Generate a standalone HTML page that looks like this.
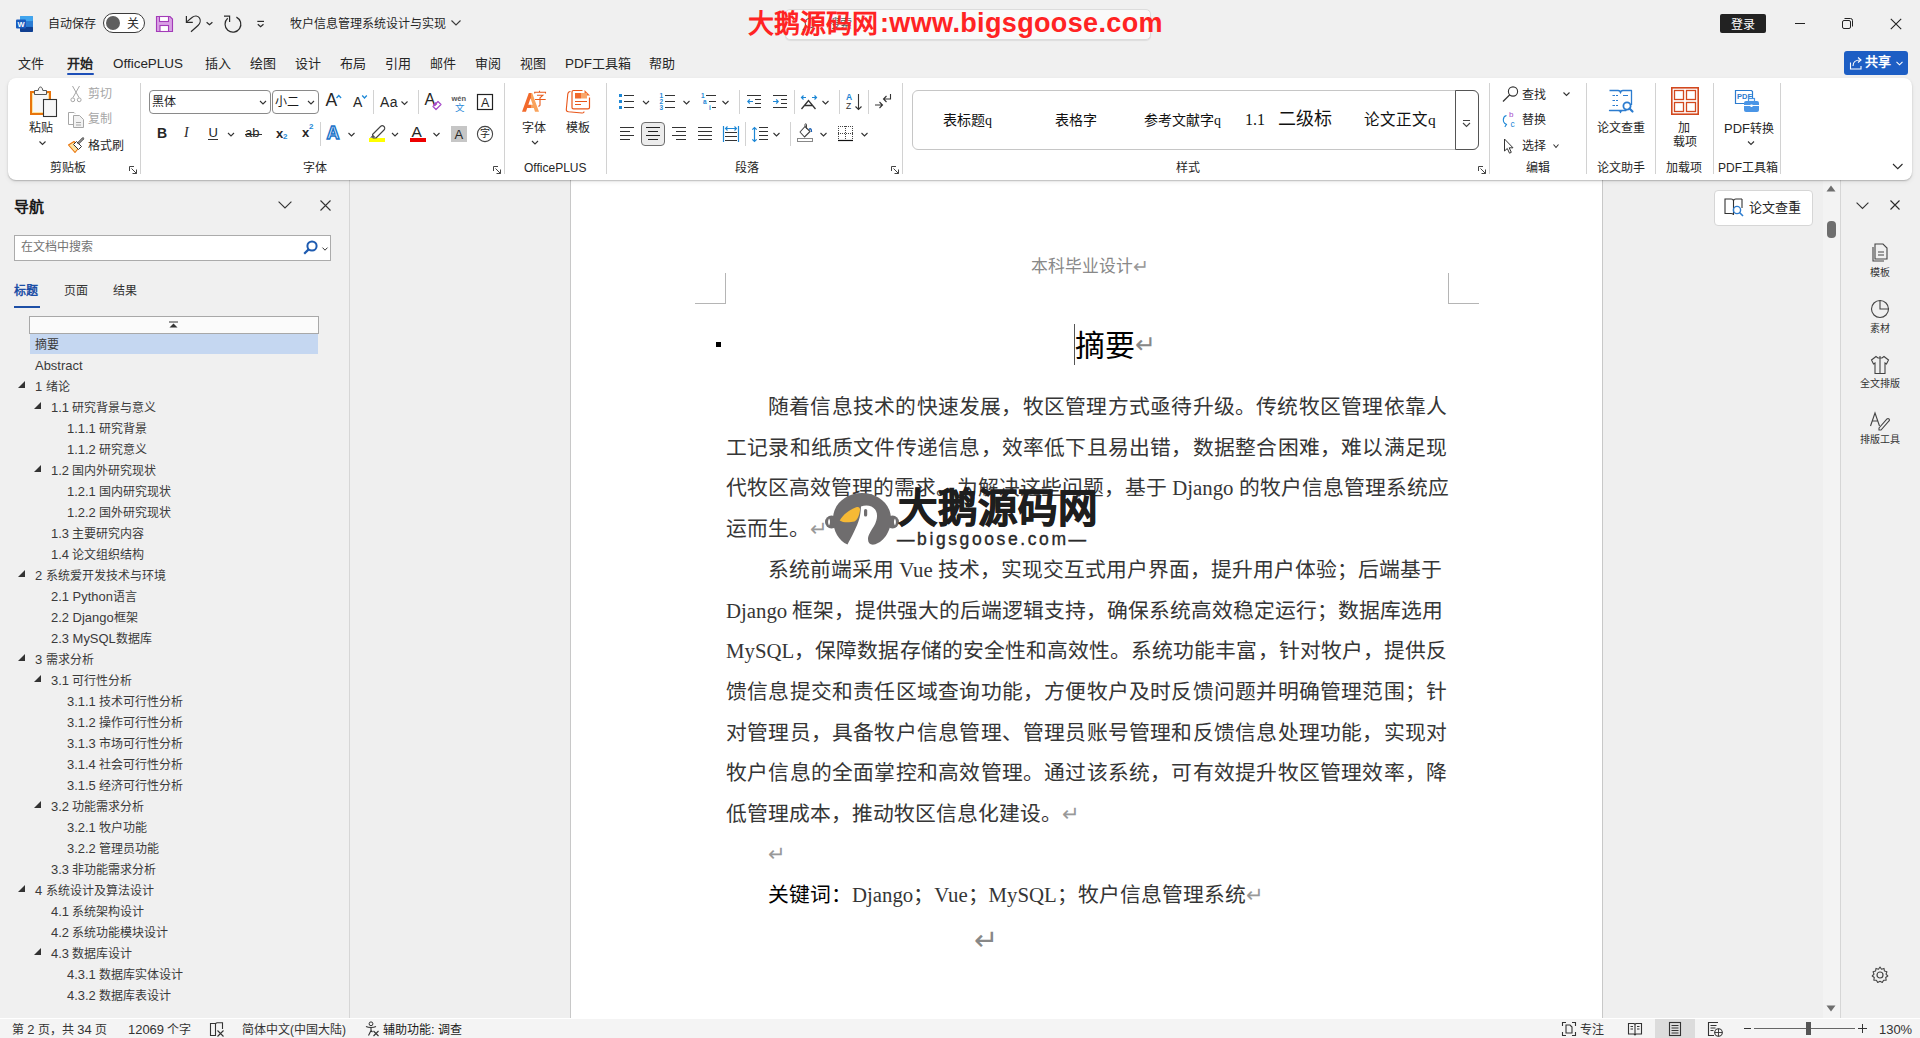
<!DOCTYPE html>
<html lang="zh-CN"><head><meta charset="utf-8"><title>Word</title>
<style>
*{box-sizing:border-box}
html,body{margin:0;padding:0}
body{width:1920px;height:1038px;overflow:hidden;position:relative;background:#f0f0f0;font-family:"Liberation Sans",sans-serif}
.a{position:absolute}
.t{white-space:nowrap}
svg{overflow:visible}
</style></head><body>
<div class="a" style="left:0px;top:0px;width:1920px;height:78px;background:#f0f0f0"></div>
<div class="a" style="left:0px;top:180px;width:349px;height:838px;background:#f0f0f0"></div>
<div class="a" style="left:349px;top:180px;width:1px;height:838px;background:#d6d6d6"></div>
<div class="a" style="left:350px;top:180px;width:1491px;height:838px;background:#efefef"></div>
<div class="a" style="left:570px;top:180px;width:1px;height:838px;background:#c8c8c8"></div>
<div class="a" style="left:571px;top:180px;width:1031px;height:838px;background:#fff"></div>
<div class="a" style="left:1602px;top:180px;width:1px;height:838px;background:#c8c8c8"></div>
<div class="a" style="left:1823px;top:180px;width:17px;height:838px;background:#f3f3f3"></div>
<div class="a" style="left:1840px;top:180px;width:1px;height:838px;background:#d6d6d6"></div>
<div class="a" style="left:1841px;top:180px;width:79px;height:838px;background:#f0f0f0"></div>
<div class="a" style="left:0px;top:1018px;width:1920px;height:1px;background:#fff"></div>
<div class="a" style="left:0px;top:1019px;width:1920px;height:19px;background:#f4f4f4"></div>
<div class="a" style="left:8px;top:78px;width:1904px;height:102px;background:#fff;border-radius:8px;box-shadow:0 1px 1.5px rgba(0,0,0,.22),0 2px 5px rgba(0,0,0,.07)"></div>
<svg class="a" style="left:16px;top:16px;" width="17" height="16" viewBox="0 0 17 16"><rect x="4" y="0" width="13" height="16" rx="1.2" fill="#2b7cd3"/><rect x="4" y="0" width="13" height="5.3" rx="1.2" fill="#41a5ee"/><rect x="4" y="10.7" width="13" height="5.3" rx="1.2" fill="#103f91"/><rect x="4" y="5.3" width="13" height="5.4" fill="#2b7cd3"/><rect x="0" y="3.5" width="10" height="9" rx="1" fill="#185abd"/><text x="5" y="11" font-size="7.5" font-weight="bold" fill="#fff" text-anchor="middle" font-family="Liberation Sans">W</text></svg>
<div class="a t" style="left:48px;top:18px;font-size:12px;line-height:12px;color:#262626;">自动保存</div>
<div class="a" style="left:103px;top:13px;width:42px;height:20px;border:1px solid #3b3b3b;border-radius:10px;background:#fff"></div>
<div class="a" style="left:106px;top:16px;width:14px;height:14px;border-radius:50%;background:#5e5e5e"></div>
<div class="a t" style="left:127px;top:18px;font-size:12px;line-height:12px;color:#262626;">关</div>
<svg class="a" style="left:156px;top:16px;" width="17" height="16" viewBox="0 0 17 16"><path d="M0.5 0.5h13.5l2.5 2.5v12.5h-16z" fill="#d9a0e4" stroke="#a33bb8" stroke-width="1.1"/><rect x="3.5" y="0.5" width="9" height="5" fill="#fff" stroke="#a33bb8" stroke-width="1.1"/><rect x="4" y="9.5" width="8.5" height="6" fill="#fff" stroke="#a33bb8" stroke-width="1.1"/></svg>
<svg class="a" style="left:180px;top:10px;" width="30" height="28" viewBox="0 0 30 28"><path d="M6.4 6V12.4H12.8" fill="none" stroke="#2b2b2b" stroke-width="1.2"/><path d="M7 11.6L12 7.5C14.5 5.3 18 5.5 19.5 8C20.8 10.2 20.2 13.5 18 15.5L11 21.8" fill="none" stroke="#2b2b2b" stroke-width="1.2"/><path d="M26.6 12.2L29.5 14.8L32.4 12.2" fill="none" stroke="#2b2b2b" stroke-width="1.2"/></svg>
<svg class="a" style="left:220px;top:10px;" width="20" height="28" viewBox="0 0 20 28"><path d="M4 6.2H9.6V11.9" fill="none" stroke="#2b2b2b" stroke-width="1.2"/><path d="M16.4 7.1A7.9 7.9 0 1 1 7.7 8.3" fill="none" stroke="#2b2b2b" stroke-width="1.2"/></svg>
<svg class="a" style="left:250px;top:10px;" width="20" height="28" viewBox="0 0 20 28"><path d="M7.3 11.4H14" stroke="#2b2b2b" stroke-width="1.2"/><path d="M7.8 14.3L10.6 16.8L13.5 14.3" fill="none" stroke="#2b2b2b" stroke-width="1.2"/></svg>
<div class="a t" style="left:290px;top:18px;font-size:12px;line-height:12px;color:#262626;">牧户信息管理系统设计与实现</div>
<svg class="a" style="left:451px;top:20px;" width="10" height="6" viewBox="0 0 10 6"><path d="M0.5 0.5L5 5L9.5 0.5" fill="none" stroke="#3a3a3a" stroke-width="1.1"/></svg>
<div class="a" style="left:785px;top:9px;width:366px;height:31px;background:#fafafa;border:1px solid #dcdcdc;border-radius:5px;box-shadow:0 1px 1px rgba(0,0,0,.08)"></div>
<svg class="a" style="left:802px;top:17px;" width="14" height="14" viewBox="0 0 14 14"><circle cx="8" cy="6" r="4.8" fill="none" stroke="#555" stroke-width="1.1"/><path d="M4.6 9.4L0.8 13.2" stroke="#555" stroke-width="1.2"/></svg>
<div class="a t" style="left:828px;top:18px;font-size:12px;line-height:12px;color:#555;">搜索</div>
<div class="a t" style="left:748px;top:9px;font-size:26px;line-height:30px;color:#ff2323;font-weight:bold;letter-spacing:0px">大鹅源码网</div>
<div class="a t" style="left:880px;top:7px;font-size:27px;line-height:32px;color:#ff2323;font-weight:bold;letter-spacing:0.35px">:www.bigsgoose.com</div>
<div class="a" style="left:1720px;top:14px;width:46px;height:19px;background:#222;border-radius:2px"></div>
<div class="a t" style="left:1731px;top:19px;font-size:12px;line-height:12px;color:#fff;">登录</div>
<div class="a" style="left:1795px;top:23px;width:10px;height:1px;background:#222"></div>
<svg class="a" style="left:1842px;top:18px;" width="12" height="12" viewBox="0 0 12 12"><rect x="0.5" y="2.5" width="8" height="8" rx="1.5" fill="none" stroke="#222" stroke-width="1"/><path d="M2.5 0.5h6a2 2 0 0 1 2 2v6" fill="none" stroke="#222" stroke-width="1"/></svg>
<svg class="a" style="left:1890px;top:18px;" width="12" height="12" viewBox="0 0 12 12"><path d="M0.8 0.8L11.2 11.2M11.2 0.8L0.8 11.2" stroke="#222" stroke-width="1.1"/></svg>
<div class="a t" style="left:18px;top:57px;font-size:13px;line-height:14px;color:#262626;">文件</div>
<div class="a t" style="left:67px;top:57px;font-size:13px;line-height:14px;color:#262626;font-weight:bold">开始</div>
<div class="a t" style="left:113px;top:57px;font-size:13px;line-height:14px;color:#262626;"><span style="font-size:1.035em">OfficePLUS</span></div>
<div class="a t" style="left:205px;top:57px;font-size:13px;line-height:14px;color:#262626;">插入</div>
<div class="a t" style="left:250px;top:57px;font-size:13px;line-height:14px;color:#262626;">绘图</div>
<div class="a t" style="left:295px;top:57px;font-size:13px;line-height:14px;color:#262626;">设计</div>
<div class="a t" style="left:340px;top:57px;font-size:13px;line-height:14px;color:#262626;">布局</div>
<div class="a t" style="left:385px;top:57px;font-size:13px;line-height:14px;color:#262626;">引用</div>
<div class="a t" style="left:430px;top:57px;font-size:13px;line-height:14px;color:#262626;">邮件</div>
<div class="a t" style="left:475px;top:57px;font-size:13px;line-height:14px;color:#262626;">审阅</div>
<div class="a t" style="left:520px;top:57px;font-size:13px;line-height:14px;color:#262626;">视图</div>
<div class="a t" style="left:565px;top:57px;font-size:13px;line-height:14px;color:#262626;"><span style="font-size:1.035em">PDF</span>工具箱</div>
<div class="a t" style="left:649px;top:57px;font-size:13px;line-height:14px;color:#262626;">帮助</div>
<div class="a" style="left:67px;top:73px;width:27px;height:2px;background:#1d4fb8;border-radius:1px"></div>
<div class="a" style="left:1844px;top:51px;width:64px;height:24px;background:#1d5ec4;border-radius:3px"></div>
<svg class="a" style="left:1849px;top:56px;" width="14" height="14" viewBox="0 0 14 14"><path d="M1.5 6.5v6.5h10.5v-3" fill="none" stroke="#fff" stroke-width="1.1"/><path d="M4 10c0-4 3-6 7-6" fill="none" stroke="#fff" stroke-width="1.1"/><path d="M9 1.5L12 4L9 6.5" fill="none" stroke="#fff" stroke-width="1.1"/></svg>
<div class="a t" style="left:1865px;top:55px;font-size:13px;line-height:14px;color:#fff;font-weight:bold">共享</div>
<svg class="a" style="left:1896px;top:61px;" width="7" height="5" viewBox="0 0 7 5"><path d="M0.5 0.8L3.5 3.8L6.5 0.8" fill="none" stroke="#fff" stroke-width="1.1"/></svg>
<div class="a" style="left:140px;top:83px;width:1px;height:91px;background:#d2d2d2"></div>
<div class="a" style="left:504px;top:83px;width:1px;height:91px;background:#d2d2d2"></div>
<div class="a" style="left:606px;top:83px;width:1px;height:91px;background:#d2d2d2"></div>
<div class="a" style="left:902px;top:83px;width:1px;height:91px;background:#d2d2d2"></div>
<div class="a" style="left:1489px;top:83px;width:1px;height:91px;background:#d2d2d2"></div>
<div class="a" style="left:1586px;top:83px;width:1px;height:91px;background:#d2d2d2"></div>
<div class="a" style="left:1655px;top:83px;width:1px;height:91px;background:#d2d2d2"></div>
<div class="a" style="left:1713px;top:83px;width:1px;height:91px;background:#d2d2d2"></div>
<div class="a" style="left:1780px;top:83px;width:1px;height:91px;background:#d2d2d2"></div>
<div class="a t" style="left:50px;top:162px;font-size:12px;line-height:12px;color:#262626;">剪贴板</div>
<div class="a t" style="left:303px;top:162px;font-size:12px;line-height:12px;color:#262626;">字体</div>
<div class="a t" style="left:735px;top:162px;font-size:12px;line-height:12px;color:#262626;">段落</div>
<div class="a t" style="left:1176px;top:162px;font-size:12px;line-height:12px;color:#262626;">样式</div>
<div class="a t" style="left:1526px;top:162px;font-size:12px;line-height:12px;color:#262626;">编辑</div>
<div class="a t" style="left:1597px;top:162px;font-size:12px;line-height:12px;color:#262626;">论文助手</div>
<div class="a t" style="left:1666px;top:162px;font-size:12px;line-height:12px;color:#262626;">加载项</div>
<div class="a t" style="left:524px;top:162px;font-size:12px;line-height:12px;color:#262626;">OfficePLUS</div>
<div class="a t" style="left:1718px;top:162px;font-size:12px;line-height:12px;color:#262626;">PDF工具箱</div>
<div class="a t" style="left:29px;top:122px;font-size:12px;line-height:12px;color:#262626;">粘贴</div>
<div class="a t" style="left:88px;top:88px;font-size:12px;line-height:12px;color:#a6a6a6;">剪切</div>
<div class="a t" style="left:88px;top:113px;font-size:12px;line-height:12px;color:#a6a6a6;">复制</div>
<div class="a t" style="left:88px;top:140px;font-size:12px;line-height:12px;color:#262626;">格式刷</div>
<div class="a" style="left:149px;top:90px;width:122px;height:24px;border:1px solid #8a8a8a;border-radius:4px;background:#fff"></div>
<div class="a t" style="left:152px;top:96px;font-size:12px;line-height:12px;color:#1a1a1a;">黑体</div>
<div class="a" style="left:272px;top:90px;width:47px;height:24px;border:1px solid #8a8a8a;border-radius:4px;background:#fff"></div>
<div class="a t" style="left:275px;top:96px;font-size:12px;line-height:12px;color:#1a1a1a;">小二</div>
<div class="a t" style="left:325.5px;top:92px;font-size:17.5px;line-height:17px;color:#262626;font-weight:300">A</div>
<div class="a t" style="left:353px;top:95.5px;font-size:14px;line-height:13px;color:#262626;">A</div>
<div class="a" style="left:373px;top:90px;width:1px;height:24px;background:#d2d2d2"></div>
<div class="a t" style="left:380px;top:95.5px;font-size:14px;line-height:13px;color:#262626;letter-spacing:0.5px">Aa</div>
<div class="a" style="left:418px;top:90px;width:1px;height:24px;background:#d2d2d2"></div>
<div class="a t" style="left:424.5px;top:92px;font-size:16px;line-height:16px;color:#262626;">A</div>
<div class="a t" style="left:451.5px;top:94.5px;font-size:7.5px;line-height:8px;color:#555;font-weight:bold">wén</div>
<div class="a t" style="left:455px;top:102.5px;font-size:9.5px;line-height:9px;color:#2c8ad8;">文</div>
<div class="a t" style="left:481px;top:96.5px;font-size:12.5px;line-height:12px;color:#262626;">A</div>
<div class="a t" style="left:157px;top:126px;font-size:14px;line-height:14px;color:#262626;font-weight:bold">B</div>
<div class="a t" style="left:184px;top:126px;font-size:14px;line-height:14px;color:#262626;font-style:italic;font-family:'Liberation Serif'">I</div>
<div class="a t" style="left:208.5px;top:126px;font-size:13px;line-height:14px;color:#262626;">U</div>
<div class="a t" style="left:245px;top:126px;font-size:13px;line-height:13px;color:#262626;">ab</div>
<div class="a t" style="left:276px;top:127px;font-size:13px;line-height:13px;color:#262626;font-weight:bold">x</div>
<div class="a t" style="left:283px;top:133px;font-size:8px;line-height:8px;color:#1e88d6;font-weight:bold">2</div>
<div class="a t" style="left:302px;top:126px;font-size:13px;line-height:13px;color:#262626;font-weight:bold">x</div>
<div class="a t" style="left:309px;top:122.5px;font-size:8px;line-height:8px;color:#1e88d6;font-weight:bold">2</div>
<div class="a" style="left:320px;top:122px;width:1px;height:24px;background:#d2d2d2"></div>
<div class="a t" style="left:326.5px;top:124px;font-size:18px;line-height:18px;color:#e9f3fc;font-weight:bold;-webkit-text-stroke:1.4px #1a73c9">A</div>
<div class="a" style="left:369px;top:138px;width:16px;height:4px;background:#ffff00"></div>
<div class="a t" style="left:411.5px;top:124px;font-size:15.5px;line-height:15px;color:#262626;">A</div>
<div class="a" style="left:410px;top:138px;width:16px;height:4px;background:#ee0000"></div>
<div class="a" style="left:451px;top:126px;width:16px;height:16px;background:#c6c6c6"></div>
<div class="a t" style="left:454.5px;top:128.5px;font-size:13px;line-height:12px;color:#262626;">A</div>
<div class="a t" style="left:480px;top:129px;font-size:10px;line-height:10px;color:#262626;">字</div>
<div class="a t" style="left:522px;top:122px;font-size:12px;line-height:12px;color:#262626;">字体</div>
<div class="a t" style="left:566px;top:122px;font-size:12px;line-height:12px;color:#262626;">模板</div>
<div class="a t" style="left:659.5px;top:93px;font-size:6.5px;line-height:6px;color:#1e88d6;font-weight:bold">1</div>
<div class="a t" style="left:659.5px;top:99px;font-size:6.5px;line-height:6px;color:#1e88d6;font-weight:bold">2</div>
<div class="a t" style="left:659.5px;top:105px;font-size:6.5px;line-height:6px;color:#1e88d6;font-weight:bold">3</div>
<div class="a t" style="left:701px;top:93px;font-size:6.5px;line-height:6px;color:#1e88d6;font-weight:bold">1</div>
<div class="a t" style="left:703px;top:99px;font-size:6.5px;line-height:6px;color:#1e88d6;font-weight:bold">a</div>
<div class="a t" style="left:709px;top:105px;font-size:6.5px;line-height:6px;color:#1e88d6;font-weight:bold">i</div>
<div class="a" style="left:739px;top:90px;width:1px;height:24px;background:#d2d2d2"></div>
<div class="a" style="left:794px;top:90px;width:1px;height:24px;background:#d2d2d2"></div>
<div class="a" style="left:839px;top:90px;width:1px;height:24px;background:#d2d2d2"></div>
<div class="a t" style="left:846px;top:93px;font-size:8.5px;line-height:8px;color:#1e88d6;font-weight:bold">A</div>
<div class="a t" style="left:846px;top:102px;font-size:8.5px;line-height:8px;color:#333;">Z</div>
<div class="a" style="left:868px;top:90px;width:1px;height:24px;background:#d2d2d2"></div>
<div class="a" style="left:641px;top:122px;width:24px;height:24px;background:#ececec;border:1px solid #6e6e6e;border-radius:4px"></div>
<div class="a" style="left:745px;top:122px;width:1px;height:24px;background:#d2d2d2"></div>
<div class="a" style="left:790px;top:122px;width:1px;height:24px;background:#d2d2d2"></div>
<div class="a" style="left:912px;top:90px;width:567px;height:60px;border:1px solid #c6c6c6;border-radius:6px;background:#fff"></div>
<div class="a" style="left:1455px;top:90px;width:24px;height:60px;border:1px solid #555;border-radius:0 6px 6px 0;background:#fff"></div>
<div class="a t" style="left:943px;top:113px;font-size:14px;line-height:16px;color:#111;font-family:'Liberation Serif',serif">表标题q</div>
<div class="a t" style="left:1055px;top:113px;font-size:14px;line-height:16px;color:#111;font-family:'Liberation Serif',serif">表格字</div>
<div class="a t" style="left:1144px;top:113px;font-size:14px;line-height:16px;color:#111;font-family:'Liberation Serif',serif">参考文献字q</div>
<div class="a t" style="left:1245px;top:111px;font-size:16px;line-height:18px;color:#111;font-family:'Liberation Serif',serif">1.1</div>
<div class="a t" style="left:1278px;top:110px;font-size:18px;line-height:19px;color:#111;font-family:'Liberation Serif',serif">二级标</div>
<div class="a t" style="left:1364px;top:111px;font-size:15.5px;line-height:18px;color:#111;font-family:'Liberation Serif',serif">论文正文q</div>
<div class="a t" style="left:1522px;top:88.5px;font-size:12px;line-height:12px;color:#262626;">查找</div>
<div class="a t" style="left:1509px;top:111px;font-size:8px;line-height:8px;color:#a64bc9;">b</div>
<div class="a t" style="left:1510.5px;top:119.5px;font-size:8.5px;line-height:8px;color:#1e88d6;">c</div>
<div class="a t" style="left:1522px;top:114px;font-size:12px;line-height:12px;color:#262626;">替换</div>
<div class="a t" style="left:1522px;top:140px;font-size:12px;line-height:12px;color:#262626;">选择</div>
<div class="a t" style="left:1597px;top:121.5px;font-size:12px;line-height:12px;color:#262626;">论文查重</div>
<div class="a t" style="left:1678px;top:121.5px;font-size:12px;line-height:12px;color:#262626;">加</div>
<div class="a t" style="left:1673px;top:135.5px;font-size:12px;line-height:12px;color:#262626;">载项</div>
<div class="a t" style="left:1737px;top:92.5px;font-size:7.5px;line-height:8px;color:#2c7ccf;font-weight:bold">PDF</div>
<div class="a t" style="left:1724px;top:122.5px;font-size:12px;line-height:12px;color:#262626;"><span style="font-size:1.08em">PDF</span>转换</div>
<svg class="a" style="left:0;top:0;z-index:5;pointer-events:none" width="1920" height="200" viewBox="0 0 1920 200"><path d="M129.5 171V166.5H134" fill="none" stroke="#444" stroke-width="1"/><path d="M131.5 168.5L136.5 173.5M136.5 169.5V173.5H132.5" fill="none" stroke="#444" stroke-width="1"/><path d="M493.5 171V166.5H498" fill="none" stroke="#444" stroke-width="1"/><path d="M495.5 168.5L500.5 173.5M500.5 169.5V173.5H496.5" fill="none" stroke="#444" stroke-width="1"/><path d="M891.5 171V166.5H896" fill="none" stroke="#444" stroke-width="1"/><path d="M893.5 168.5L898.5 173.5M898.5 169.5V173.5H894.5" fill="none" stroke="#444" stroke-width="1"/><path d="M1478.5 171V166.5H1483" fill="none" stroke="#444" stroke-width="1"/><path d="M1480.5 168.5L1485.5 173.5M1485.5 169.5V173.5H1481.5" fill="none" stroke="#444" stroke-width="1"/><path d="M1893 164L1897.75 168.7L1902.5 164" fill="none" stroke="#2a2a2a" stroke-width="1.1"/><rect x="31" y="92" width="19" height="22" fill="#f7f7f7" stroke="#e8740c" stroke-width="2"/><rect x="32.5" y="93.5" width="16" height="19" fill="none" stroke="#fde3a0" stroke-width="1"/><path d="M34.5 94.5V90.5H38.2C38.5 88 39.5 87 40.5 87C41.5 87 42.5 88 42.8 90.5H46.5V94.5z" fill="#f7f7f7" stroke="#555" stroke-width="1"/><rect x="43.5" y="99.5" width="13" height="17" fill="#f7f7f7" stroke="#333" stroke-width="1.1"/><path d="M39.5 141.5L42.5 144.5L45.5 141.5" fill="none" stroke="#333" stroke-width="1.1"/><path d="M72.5 86L79 97.5M79.5 86L73 97.5" stroke="#a6a6a6" stroke-width="1"/><circle cx="72.8" cy="99.8" r="1.9" fill="none" stroke="#a6a6a6" stroke-width="1"/><circle cx="79.2" cy="99.8" r="1.9" fill="none" stroke="#a6a6a6" stroke-width="1"/><path d="M73 124.5H68.5V112.5H74L75 113.5" fill="none" stroke="#a6a6a6" stroke-width="1"/><path d="M73.5 115.5H79.5L83.5 119.5V127.5H73.5z" fill="#f2f2f2" stroke="#a6a6a6" stroke-width="1"/><path d="M76 122.5h5M76 125h5" stroke="#a6a6a6" stroke-width="1"/><path d="M68.5 145L74 141.5L79.5 147L75 152.5z" fill="#fde3a0" stroke="#e8740c" stroke-width="1.1" stroke-linejoin="round"/><path d="M73.5 144.5L76.5 141.5L81.5 146.5L78.5 149.5z" fill="#fff" stroke="#333" stroke-width="1"/><path d="M78.5 143L83 138.5" stroke="#333" stroke-width="2.4" stroke-linecap="round"/><path d="M78.5 143L83 138.5" stroke="#fff" stroke-width="0.8" stroke-linecap="round"/><path d="M260 101L263.0 104L266 101" fill="none" stroke="#333" stroke-width="1.1"/><path d="M308 101L311.0 104L314 101" fill="none" stroke="#333" stroke-width="1.1"/><path d="M336.5 98L338.8 95.5L341.1 98" fill="none" stroke="#1e88d6" stroke-width="1.3"/><path d="M362.2 95.5L364.5 98L366.8 95.5" fill="none" stroke="#1e88d6" stroke-width="1.3"/><path d="M401.5 101.5L404.5 104.5L407.5 101.5" fill="none" stroke="#333" stroke-width="1.1"/><path d="M433 106.5L438 101.5L441 104.5L436 109.5z" fill="#fff" stroke="#a64bc9" stroke-width="1.2" stroke-linejoin="round"/><path d="M433.8 105.7L436.5 103" stroke="#a64bc9" stroke-width="2.5"/><rect x="477.5" y="94.5" width="15" height="15" fill="none" stroke="#222" stroke-width="1.2"/><path d="M208 139.5H218" stroke="#333" stroke-width="1"/><path d="M228 133L231.0 136L234 133" fill="none" stroke="#333" stroke-width="1.1"/><path d="M245 134.5H262" stroke="#333" stroke-width="1"/><path d="M348.5 133L351.5 136L354.5 133" fill="none" stroke="#333" stroke-width="1.1"/><path d="M372.5 134.5L380.5 126.5C381.5 125.5 383 125.5 384 126.5C385 127.5 385 129 384 130L376 138H373z" fill="#fff" stroke="#444" stroke-width="1.1" stroke-linejoin="round"/><path d="M370 137.8L373 134.8L375.5 137.3z" fill="#555"/><path d="M392 133L395.0 136L398 133" fill="none" stroke="#333" stroke-width="1.1"/><path d="M433.5 133L436.5 136L439.5 133" fill="none" stroke="#333" stroke-width="1.1"/><circle cx="485" cy="134" r="7.6" fill="none" stroke="#444" stroke-width="1.1"/><defs><linearGradient id="ag" gradientUnits="userSpaceOnUse" x1="522" y1="0" x2="539" y2="0"><stop offset="0.5" stop-color="#f26a2c"/><stop offset="0.5" stop-color="#f9a35c"/></linearGradient></defs><path d="M522 111.8L528.8 93H532.2L539 111.8H535L533.8 108H527.2L526 111.8zM528.3 104.8H532.7L530.5 98.2z" fill="url(#ag)" fill-rule="evenodd"/><path d="M534.7 93.5V92.2H545.5V93.5M539.5 90.8V92M537 95.3H542.8L540 97.8V104.8C540 105.8 539.3 106.3 538.3 106M535 99.5H545.7" fill="none" stroke="#e85a1a" stroke-width="1.1"/><path d="M532 141L535.0 144L538 141" fill="none" stroke="#333" stroke-width="1.1"/><path d="M570.5 91.5C568.5 91.5 568 92.5 567.8 94L566.3 109.5C566.2 111 566.8 111.5 568.5 111.8L582 113C583.5 113.1 584 112.5 584 111.5" fill="none" stroke="#e8561a" stroke-width="1.1"/><path d="M582.5 90.5H573.5C572.5 90.5 572 91 572 92V107.5C572 108.2 572.5 108.8 573.5 108.8H588C589 108.8 589.5 108.2 589.5 107.5V97.5" fill="none" stroke="#e8561a" stroke-width="1.2"/><path d="M584.5 90L590 95.5H584.5z" fill="#f26a2c"/><rect x="575" y="93" width="6" height="5.5" fill="#f26a2c"/><rect x="581" y="93" width="6" height="5.5" fill="#f9a66a"/><path d="M575 101.5H587M575 104.5H581" stroke="#e8561a" stroke-width="1.1"/><rect x="619" y="94" width="3" height="3" fill="#1e88d6"/><rect x="619" y="100" width="3" height="3" fill="#1e88d6"/><rect x="619" y="106" width="3" height="3" fill="#1e88d6"/><path d="M624 95.5H634" stroke="#333" stroke-width="1"/><path d="M624 101.5H634" stroke="#333" stroke-width="1"/><path d="M624 107.5H634" stroke="#333" stroke-width="1"/><path d="M643 101L646.0 104L649 101" fill="none" stroke="#333" stroke-width="1.1"/><path d="M665 95.5H675" stroke="#333" stroke-width="1"/><path d="M665 101.5H675" stroke="#333" stroke-width="1"/><path d="M665 107.5H675" stroke="#333" stroke-width="1"/><path d="M683.5 101L686.5 104L689.5 101" fill="none" stroke="#333" stroke-width="1.1"/><path d="M706 95.5H716" stroke="#333" stroke-width="1"/><path d="M709 101.5H716" stroke="#333" stroke-width="1"/><path d="M712 107.5H716" stroke="#333" stroke-width="1"/><path d="M722.5 101L725.5 104L728.5 101" fill="none" stroke="#333" stroke-width="1.1"/><path d="M747 95.5H761" stroke="#333" stroke-width="1"/><path d="M755 99.5H761" stroke="#333" stroke-width="1"/><path d="M755 103.5H761" stroke="#333" stroke-width="1"/><path d="M747 107.5H761" stroke="#333" stroke-width="1"/><path d="M753 101.5H747.8M749.8 99.3L747.8 101.5L749.8 103.7" fill="none" stroke="#1e88d6" stroke-width="1.2"/><path d="M773 95.5H787" stroke="#333" stroke-width="1"/><path d="M781 99.5H787" stroke="#333" stroke-width="1"/><path d="M781 103.5H787" stroke="#333" stroke-width="1"/><path d="M773 107.5H787" stroke="#333" stroke-width="1"/><path d="M773 101.5H778.2M776.2 99.3L778.2 101.5L776.2 103.7" fill="none" stroke="#1e88d6" stroke-width="1.2"/><path d="M801.5 97.5H806M803.5 95.5L801.5 97.5L803.5 99.5M812 97.5H816.5M814.5 95.5L816.5 97.5L814.5 99.5" fill="none" stroke="#1e88d6" stroke-width="1.2"/><path d="M801.5 109L808.5 100.5L815.5 109M804.5 105.5H812.5" fill="none" stroke="#333" stroke-width="1.3"/><path d="M822.5 101L825.5 104L828.5 101" fill="none" stroke="#333" stroke-width="1.1"/><path d="M858.5 94V109.5M855.5 106.5L858.5 109.5L861.5 106.5" fill="none" stroke="#333" stroke-width="1.1"/><path d="M875 105H882.5M879.5 102L882.5 105L879.5 108" fill="none" stroke="#333" stroke-width="1.1"/><path d="M890.5 94V99H883.5M886.5 96L883.5 99L886.5 102" fill="none" stroke="#333" stroke-width="1.1"/><path d="M620 127.5H634" stroke="#333" stroke-width="1"/><path d="M620 131.5H630" stroke="#333" stroke-width="1"/><path d="M620 135.5H634" stroke="#333" stroke-width="1"/><path d="M620 139.5H630" stroke="#333" stroke-width="1"/><path d="M646 127.5H660" stroke="#222" stroke-width="1"/><path d="M648 131.5H658" stroke="#222" stroke-width="1"/><path d="M646 135.5H660" stroke="#222" stroke-width="1"/><path d="M648 139.5H658" stroke="#222" stroke-width="1"/><path d="M672 127.5H686" stroke="#333" stroke-width="1"/><path d="M676 131.5H686" stroke="#333" stroke-width="1"/><path d="M672 135.5H686" stroke="#333" stroke-width="1"/><path d="M676 139.5H686" stroke="#333" stroke-width="1"/><path d="M698 127.5H712" stroke="#333" stroke-width="1"/><path d="M698 131.5H712" stroke="#333" stroke-width="1"/><path d="M698 135.5H712" stroke="#333" stroke-width="1"/><path d="M698 139.5H712" stroke="#333" stroke-width="1"/><path d="M723.5 126V142M738.5 126V142" stroke="#1e88d6" stroke-width="1.2"/><path d="M725.5 128.5H736.5M727.5 126.5L725.5 128.5L727.5 130.5M734.5 126.5L736.5 128.5L734.5 130.5" fill="none" stroke="#1e88d6" stroke-width="1.1"/><path d="M725 132.5H737" stroke="#333" stroke-width="1"/><path d="M725 136.5H737" stroke="#333" stroke-width="1"/><path d="M725 140.5H737" stroke="#333" stroke-width="1"/><path d="M754.5 127.5V141.5M752.3 129.7L754.5 127.5L756.7 129.7M752.3 139.3L754.5 141.5L756.7 139.3" fill="none" stroke="#1e88d6" stroke-width="1.2"/><path d="M759 127.5H768" stroke="#333" stroke-width="1"/><path d="M759 131.5H768" stroke="#333" stroke-width="1"/><path d="M759 135.5H768" stroke="#333" stroke-width="1"/><path d="M759 139.5H768" stroke="#333" stroke-width="1"/><path d="M773.5 133L776.5 136L779.5 133" fill="none" stroke="#333" stroke-width="1.1"/><path d="M800 132L805 126.5L810 131.5L804.5 137z" fill="#fff" stroke="#444" stroke-width="1.1" stroke-linejoin="round"/><path d="M805 126.5V124.5C805 123.5 806.5 123.5 806.5 124.5V129" fill="none" stroke="#444" stroke-width="1"/><path d="M809 129.5C810.5 128 811.5 129 811.5 132" fill="none" stroke="#1a5fb4" stroke-width="1.3"/><rect x="797.5" y="138.5" width="15" height="3" fill="#fff" stroke="#888" stroke-width="1"/><path d="M820.5 133L823.5 136L826.5 133" fill="none" stroke="#333" stroke-width="1.1"/><path d="M838 126.5H853M838 133.5H853" stroke="#444" stroke-width="1" stroke-dasharray="1 1"/><path d="M838.5 126V140M845.5 126V140M852.5 126V140" stroke="#444" stroke-width="1" stroke-dasharray="1 1"/><path d="M838 140.5H853" stroke="#111" stroke-width="1.2"/><path d="M861.5 133L864.5 136L867.5 133" fill="none" stroke="#333" stroke-width="1.1"/><path d="M1463 120.5H1470" stroke="#444" stroke-width="1"/><path d="M1463 123L1466.5 126.5L1470 123" fill="none" stroke="#444" stroke-width="1.1"/><circle cx="1513" cy="91.5" r="4.6" fill="none" stroke="#333" stroke-width="1.1"/><path d="M1509.8 94.8L1503 101.5" stroke="#333" stroke-width="1.2"/><path d="M1563.5 92.5L1566.5 95.5L1569.5 92.5" fill="none" stroke="#333" stroke-width="1.1"/><path d="M1506.5 115.5C1502.5 116.5 1502 122.5 1506.5 124.5M1504.2 123L1506.5 124.5L1504.8 126.8" fill="none" stroke="#1e88d6" stroke-width="1.1"/><path d="M1504.5 139L1504.5 151L1507.3 148.5L1509.5 153.2L1511.3 152.3L1509.2 147.8H1513z" fill="#fff" stroke="#333" stroke-width="1" stroke-linejoin="round"/><path d="M1553.5 144.5L1556.0 147.5L1558.5 144.5" fill="none" stroke="#333" stroke-width="1.1"/><path d="M1609.5 90.5H1618C1619.5 90.5 1620.5 91.5 1620.5 93C1620.5 91.5 1621.5 90.5 1623 90.5H1631.5V105M1626 110.5H1623C1621.5 110.5 1620.5 111.5 1620.5 112.5C1620.5 111.5 1619.5 110.5 1618 110.5H1609.5z" fill="none" stroke="#2c7ccf" stroke-width="1.3" stroke-linejoin="round"/><path d="M1612.5 95.5h2.5M1616 95.5h2M1623 95.5h5M1612.5 100.5h2.5M1616 100.5h2M1612.5 105.5h2.5M1616 105.5h2" stroke="#2c7ccf" stroke-width="1.1"/><circle cx="1627" cy="106" r="3.6" fill="#fff" stroke="#2c7ccf" stroke-width="1.8"/><path d="M1629.5 108.5L1632.5 111.5" stroke="#2c7ccf" stroke-width="2.2" stroke-linecap="round"/><rect x="1671.8" y="87.8" width="26.4" height="26.4" fill="none" stroke="#d2481e" stroke-width="1.6"/><rect x="1674.5" y="90.5" width="9" height="9" fill="none" stroke="#d2481e" stroke-width="1.3"/><rect x="1686.5" y="90.5" width="9" height="9" fill="none" stroke="#d2481e" stroke-width="1.3"/><rect x="1674.5" y="102.5" width="9" height="9" fill="none" stroke="#d2481e" stroke-width="1.3"/><rect x="1686.5" y="102.5" width="9" height="9" fill="none" stroke="#d2481e" stroke-width="1.3"/><path d="M1744 103.5H1735.5V90.5H1751.5L1752.5 91.5V99" fill="none" stroke="#2c7ccf" stroke-width="1.2"/><rect x="1744" y="101" width="15" height="11" rx="2" fill="#4a95e6"/><rect x="1748.5" y="98.5" width="6" height="3" fill="none" stroke="#4a95e6" stroke-width="1.2"/><path d="M1744 105.5h15" stroke="#fff" stroke-width="1"/><path d="M1750.5 104.5h2v2.5h-2z" fill="#fff"/><path d="M1748 141.5L1751.0 144.5L1754 141.5" fill="none" stroke="#333" stroke-width="1.1"/></svg>
<div class="a t" style="left:14px;top:199px;font-size:15px;line-height:16px;color:#1a1a1a;font-weight:bold">导航</div>
<svg class="a" style="left:278px;top:201px;" width="14" height="8" viewBox="0 0 14 8"><path d="M0.6 0.6L7 7L13.4 0.6" fill="none" stroke="#333" stroke-width="1.1"/></svg>
<svg class="a" style="left:320px;top:200px;" width="11" height="11" viewBox="0 0 11 11"><path d="M0.5 0.5L10.5 10.5M10.5 0.5L0.5 10.5" stroke="#333" stroke-width="1.1"/></svg>
<div class="a" style="left:14px;top:235px;width:317px;height:26px;background:#fff;border:1px solid #ababab"></div>
<div class="a t" style="left:21px;top:241px;font-size:12px;line-height:12px;color:#737373;">在文档中搜索</div>
<svg class="a" style="left:303px;top:240px;" width="15" height="15" viewBox="0 0 15 15"><circle cx="9" cy="6" r="4.6" fill="none" stroke="#1e5bb0" stroke-width="2"/><path d="M5.6 9.4L1.2 13.8" stroke="#1e5bb0" stroke-width="2.2"/></svg>
<svg class="a" style="left:322px;top:247px;" width="6" height="4" viewBox="0 0 6 4"><path d="M0.5 0.6L3 3.2L5.5 0.6" fill="none" stroke="#333" stroke-width="1"/></svg>
<div class="a t" style="left:14px;top:285px;font-size:12px;line-height:13px;color:#1d4fa6;font-weight:bold">标题</div>
<div class="a" style="left:14px;top:306px;width:26px;height:2px;background:#1d4fa6"></div>
<div class="a t" style="left:64px;top:285px;font-size:12px;line-height:13px;color:#333;">页面</div>
<div class="a t" style="left:113px;top:285px;font-size:12px;line-height:13px;color:#333;">结果</div>
<div class="a" style="left:29px;top:316px;width:290px;height:18px;background:#fbfbfb;border:1px solid #a8a8a8"></div>
<svg class="a" style="left:169px;top:321px;" width="9" height="7" viewBox="0 0 9 7"><path d="M0 1h9" stroke="#333" stroke-width="1"/><path d="M0.5 6.5L4.5 2.5L8.5 6.5z" fill="#333"/></svg>
<div class="a" style="left:30px;top:334px;width:288px;height:20px;background:#c5d7f1"></div>
<div class="a t" style="left:35px;top:339px;font-size:12px;line-height:12px;color:#3a3a3a;">摘要</div>
<div class="a t" style="left:35px;top:360px;font-size:12px;line-height:12px;color:#3a3a3a;"><span style="font-size:1.08em">Abstract</span></div>
<div class="a t" style="left:35px;top:381px;font-size:12px;line-height:12px;color:#3a3a3a;"><span style="font-size:1.08em">1</span> 绪论</div>
<svg class="a" style="left:18px;top:381px;" width="7" height="7" viewBox="0 0 7 7"><path d="M7 0V7H0z" fill="#333"/></svg>
<div class="a t" style="left:51px;top:402px;font-size:12px;line-height:12px;color:#3a3a3a;"><span style="font-size:1.08em">1.1</span> 研究背景与意义</div>
<svg class="a" style="left:34px;top:402px;" width="7" height="7" viewBox="0 0 7 7"><path d="M7 0V7H0z" fill="#333"/></svg>
<div class="a t" style="left:67px;top:423px;font-size:12px;line-height:12px;color:#3a3a3a;"><span style="font-size:1.08em">1.1.1</span> 研究背景</div>
<div class="a t" style="left:67px;top:444px;font-size:12px;line-height:12px;color:#3a3a3a;"><span style="font-size:1.08em">1.1.2</span> 研究意义</div>
<div class="a t" style="left:51px;top:465px;font-size:12px;line-height:12px;color:#3a3a3a;"><span style="font-size:1.08em">1.2</span> 国内外研究现状</div>
<svg class="a" style="left:34px;top:465px;" width="7" height="7" viewBox="0 0 7 7"><path d="M7 0V7H0z" fill="#333"/></svg>
<div class="a t" style="left:67px;top:486px;font-size:12px;line-height:12px;color:#3a3a3a;"><span style="font-size:1.08em">1.2.1</span> 国内研究现状</div>
<div class="a t" style="left:67px;top:507px;font-size:12px;line-height:12px;color:#3a3a3a;"><span style="font-size:1.08em">1.2.2</span> 国外研究现状</div>
<div class="a t" style="left:51px;top:528px;font-size:12px;line-height:12px;color:#3a3a3a;"><span style="font-size:1.08em">1.3</span> 主要研究内容</div>
<div class="a t" style="left:51px;top:549px;font-size:12px;line-height:12px;color:#3a3a3a;"><span style="font-size:1.08em">1.4</span> 论文组织结构</div>
<div class="a t" style="left:35px;top:570px;font-size:12px;line-height:12px;color:#3a3a3a;"><span style="font-size:1.08em">2</span> 系统爱开发技术与环境</div>
<svg class="a" style="left:18px;top:570px;" width="7" height="7" viewBox="0 0 7 7"><path d="M7 0V7H0z" fill="#333"/></svg>
<div class="a t" style="left:51px;top:591px;font-size:12px;line-height:12px;color:#3a3a3a;"><span style="font-size:1.08em">2.1 Python</span>语言</div>
<div class="a t" style="left:51px;top:612px;font-size:12px;line-height:12px;color:#3a3a3a;"><span style="font-size:1.08em">2.2 Django</span>框架</div>
<div class="a t" style="left:51px;top:633px;font-size:12px;line-height:12px;color:#3a3a3a;"><span style="font-size:1.08em">2.3 MySQL</span>数据库</div>
<div class="a t" style="left:35px;top:654px;font-size:12px;line-height:12px;color:#3a3a3a;"><span style="font-size:1.08em">3</span> 需求分析</div>
<svg class="a" style="left:18px;top:654px;" width="7" height="7" viewBox="0 0 7 7"><path d="M7 0V7H0z" fill="#333"/></svg>
<div class="a t" style="left:51px;top:675px;font-size:12px;line-height:12px;color:#3a3a3a;"><span style="font-size:1.08em">3.1</span> 可行性分析</div>
<svg class="a" style="left:34px;top:675px;" width="7" height="7" viewBox="0 0 7 7"><path d="M7 0V7H0z" fill="#333"/></svg>
<div class="a t" style="left:67px;top:696px;font-size:12px;line-height:12px;color:#3a3a3a;"><span style="font-size:1.08em">3.1.1</span> 技术可行性分析</div>
<div class="a t" style="left:67px;top:717px;font-size:12px;line-height:12px;color:#3a3a3a;"><span style="font-size:1.08em">3.1.2</span> 操作可行性分析</div>
<div class="a t" style="left:67px;top:738px;font-size:12px;line-height:12px;color:#3a3a3a;"><span style="font-size:1.08em">3.1.3</span> 市场可行性分析</div>
<div class="a t" style="left:67px;top:759px;font-size:12px;line-height:12px;color:#3a3a3a;"><span style="font-size:1.08em">3.1.4</span> 社会可行性分析</div>
<div class="a t" style="left:67px;top:780px;font-size:12px;line-height:12px;color:#3a3a3a;"><span style="font-size:1.08em">3.1.5</span> 经济可行性分析</div>
<div class="a t" style="left:51px;top:801px;font-size:12px;line-height:12px;color:#3a3a3a;"><span style="font-size:1.08em">3.2</span> 功能需求分析</div>
<svg class="a" style="left:34px;top:801px;" width="7" height="7" viewBox="0 0 7 7"><path d="M7 0V7H0z" fill="#333"/></svg>
<div class="a t" style="left:67px;top:822px;font-size:12px;line-height:12px;color:#3a3a3a;"><span style="font-size:1.08em">3.2.1</span> 牧户功能</div>
<div class="a t" style="left:67px;top:843px;font-size:12px;line-height:12px;color:#3a3a3a;"><span style="font-size:1.08em">3.2.2</span> 管理员功能</div>
<div class="a t" style="left:51px;top:864px;font-size:12px;line-height:12px;color:#3a3a3a;"><span style="font-size:1.08em">3.3</span> 非功能需求分析</div>
<div class="a t" style="left:35px;top:885px;font-size:12px;line-height:12px;color:#3a3a3a;"><span style="font-size:1.08em">4</span> 系统设计及算法设计</div>
<svg class="a" style="left:18px;top:885px;" width="7" height="7" viewBox="0 0 7 7"><path d="M7 0V7H0z" fill="#333"/></svg>
<div class="a t" style="left:51px;top:906px;font-size:12px;line-height:12px;color:#3a3a3a;"><span style="font-size:1.08em">4.1</span> 系统架构设计</div>
<div class="a t" style="left:51px;top:927px;font-size:12px;line-height:12px;color:#3a3a3a;"><span style="font-size:1.08em">4.2</span> 系统功能模块设计</div>
<div class="a t" style="left:51px;top:948px;font-size:12px;line-height:12px;color:#3a3a3a;"><span style="font-size:1.08em">4.3</span> 数据库设计</div>
<svg class="a" style="left:34px;top:948px;" width="7" height="7" viewBox="0 0 7 7"><path d="M7 0V7H0z" fill="#333"/></svg>
<div class="a t" style="left:67px;top:969px;font-size:12px;line-height:12px;color:#3a3a3a;"><span style="font-size:1.08em">4.3.1</span> 数据库实体设计</div>
<div class="a t" style="left:67px;top:990px;font-size:12px;line-height:12px;color:#3a3a3a;"><span style="font-size:1.08em">4.3.2</span> 数据库表设计</div>
<div class="a t" style="left:1031px;top:258px;font-size:16.8px;line-height:18px;color:#888;font-family:'Liberation Serif',serif">本科毕业设计</div>
<div class="a t" style="left:1133px;top:257px;font-size:18.5px;line-height:20px;color:#999;font-family:'Liberation Serif',serif">↵</div>
<div class="a" style="left:725px;top:273px;width:1px;height:31px;background:#b5b5b5"></div>
<div class="a" style="left:695px;top:303px;width:31px;height:1px;background:#b5b5b5"></div>
<div class="a" style="left:1448px;top:273px;width:1px;height:31px;background:#b5b5b5"></div>
<div class="a" style="left:1448px;top:303px;width:31px;height:1px;background:#b5b5b5"></div>
<div class="a" style="left:716px;top:342px;width:5px;height:5px;background:#000"></div>
<div class="a" style="left:1074px;top:324px;width:1px;height:41px;background:#555"></div>
<div class="a t" style="left:1075px;top:330px;font-size:30px;line-height:32px;color:#000;">摘要</div>
<div class="a t" style="left:1135px;top:332px;font-size:25px;line-height:26px;color:#888;font-family:'Liberation Serif',serif">↵</div>
<div class="a" style="left:768px;top:394.5px;font-size:20.8px;line-height:24px;color:#363636;white-space:nowrap;width:679px;font-family:'Liberation Serif',serif;text-align:justify;text-align-last:justify;">随着信息技术的快速发展，牧区管理方式亟待升级。传统牧区管理依靠人</div>
<div class="a" style="left:726px;top:435.5px;font-size:20.8px;line-height:24px;color:#363636;white-space:nowrap;width:721px;font-family:'Liberation Serif',serif;text-align:justify;text-align-last:justify;">工记录和纸质文件传递信息，效率低下且易出错，数据整合困难，难以满足现</div>
<div class="a" style="left:726px;top:475.5px;font-size:20.8px;line-height:24px;color:#363636;white-space:nowrap;width:721px;font-family:'Liberation Serif',serif;text-align:justify;text-align-last:justify;">代牧区高效管理的需求。为解决这些问题，基于 Django 的牧户信息管理系统应</div>
<div class="a" style="left:726px;top:516.5px;font-size:20.8px;line-height:24px;color:#363636;white-space:nowrap;width:300px;font-family:'Liberation Serif',serif;">运而生。<span style="color:#999">↵</span></div>
<div class="a" style="left:768px;top:557.5px;font-size:20.8px;line-height:24px;color:#363636;white-space:nowrap;width:674px;font-family:'Liberation Serif',serif;text-align:justify;text-align-last:justify;">系统前端采用 Vue 技术，实现交互式用户界面，提升用户体验；后端基于</div>
<div class="a" style="left:726px;top:598.5px;font-size:20.8px;line-height:24px;color:#363636;white-space:nowrap;width:715px;font-family:'Liberation Serif',serif;text-align:justify;text-align-last:justify;">Django 框架，提供强大的后端逻辑支持，确保系统高效稳定运行；数据库选用</div>
<div class="a" style="left:726px;top:638.5px;font-size:20.8px;line-height:24px;color:#363636;white-space:nowrap;width:721px;font-family:'Liberation Serif',serif;text-align:justify;text-align-last:justify;">MySQL，保障数据存储的安全性和高效性。系统功能丰富，针对牧户，提供反</div>
<div class="a" style="left:726px;top:679.5px;font-size:20.8px;line-height:24px;color:#363636;white-space:nowrap;width:721px;font-family:'Liberation Serif',serif;text-align:justify;text-align-last:justify;">馈信息提交和责任区域查询功能，方便牧户及时反馈问题并明确管理范围；针</div>
<div class="a" style="left:726px;top:720.5px;font-size:20.8px;line-height:24px;color:#363636;white-space:nowrap;width:721px;font-family:'Liberation Serif',serif;text-align:justify;text-align-last:justify;">对管理员，具备牧户信息管理、管理员账号管理和反馈信息处理功能，实现对</div>
<div class="a" style="left:726px;top:760.5px;font-size:20.8px;line-height:24px;color:#363636;white-space:nowrap;width:721px;font-family:'Liberation Serif',serif;text-align:justify;text-align-last:justify;">牧户信息的全面掌控和高效管理。通过该系统，可有效提升牧区管理效率，降</div>
<div class="a" style="left:726px;top:801.5px;font-size:20.8px;line-height:24px;color:#363636;white-space:nowrap;width:400px;font-family:'Liberation Serif',serif;">低管理成本，推动牧区信息化建设。<span style="color:#999">↵</span></div>
<div class="a" style="left:768px;top:841.5px;font-size:20.8px;line-height:24px;color:#363636;white-space:nowrap;width:50px;font-family:'Liberation Serif',serif;"><span style="color:#999">↵</span></div>
<div class="a" style="left:768px;top:882.5px;font-size:20.8px;line-height:24px;color:#363636;white-space:nowrap;width:600px;font-family:'Liberation Serif',serif;"><span style="color:#000">关键词：</span>Django；Vue；MySQL；牧户信息管理系统<span style="color:#999">↵</span></div>
<div class="a t" style="left:974px;top:925px;font-size:29px;line-height:30px;color:#888;font-family:'Liberation Serif',serif">↵</div>
<svg class="a" style="left:826px;top:493px;" width="72" height="53" viewBox="0 0 72 53"><circle cx="5.5" cy="29" r="6.5" fill="#6f6d6e"/><circle cx="66.5" cy="29" r="6.5" fill="#6f6d6e"/><path d="M3 25.5C1.8 27.5 1.8 30.5 3 32.5C4.2 31 4.5 27 3 25.5z M69 25.5C70.2 27.5 70.2 30.5 69 32.5C67.8 31 67.5 27 69 25.5z" fill="#fff"/><path d="M36 0C52 0 65 11 65 26C65 40 56 50 48 51.6C44 52 42 50 42 46C42 42 45 38 48 33C51 28 52 22 50 18C47 12 40 11.5 35 13.5C34.8 17 34.5 21 33.5 25C31 34 25.5 44 21.5 51.5C13 48 7 38 7 26C7 11 20 0 36 0z" fill="#6f6d6e"/><path d="M13.75 27.5C18 20 26 15.5 31 14C33 13.5 34.2 15 34 17C33.5 22 31.5 27 28.5 28.5C24 29.5 17 30 13.75 27.5z" fill="#f6b935"/><rect x="38" y="16" width="3.2" height="7.5" rx="1.6" fill="#6f6d6e"/></svg>
<div class="a t" style="left:898px;top:486px;font-size:39.5px;line-height:44px;color:#1e1e1e;font-weight:900;-webkit-text-stroke:0.9px #1e1e1e">大鹅源码网</div>
<div class="a t" style="left:897px;top:530px;font-size:17.5px;line-height:18px;color:#2a2a2a;letter-spacing:2.6px;-webkit-text-stroke:0.35px #2a2a2a">—bigsgoose.com—</div>
<div class="a" style="left:1714px;top:190px;width:99px;height:36px;background:#fff;border:1px solid #d6d6d6;border-radius:4px"></div>
<svg class="a" style="left:1724px;top:198px;" width="20" height="20" viewBox="0 0 20 20"><path d="M1 1h6c1.5 0 2.5 1 2.5 2V17c0-1-1-1.5-2.5-1.5H1z M18 1h-6c-1.5 0-2.5 1-2.5 2" fill="none" stroke="#333" stroke-width="1.1"/><path d="M18 1v9" stroke="#333" stroke-width="1.1"/><circle cx="13" cy="12" r="3.6" fill="none" stroke="#2c7ccf" stroke-width="1.4"/><path d="M15.5 14.5L19 18" stroke="#2c7ccf" stroke-width="1.6"/></svg>
<div class="a t" style="left:1749px;top:201px;font-size:13px;line-height:14px;color:#262626;">论文查重</div>
<svg class="a" style="left:1826px;top:185px;" width="10" height="7" viewBox="0 0 10 7"><path d="M0.5 6.5L5 0.5L9.5 6.5z" fill="#6e6e6e"/></svg>
<div class="a" style="left:1827px;top:221px;width:9px;height:17px;background:#6e6e6e;border-radius:4px"></div>
<svg class="a" style="left:1826px;top:1005px;" width="10" height="7" viewBox="0 0 10 7"><path d="M0.5 0.5L5 6.5L9.5 0.5z" fill="#6e6e6e"/></svg>
<svg class="a" style="left:1856px;top:202px;" width="13" height="7" viewBox="0 0 13 7"><path d="M0.6 0.6L6.5 6.4L12.4 0.6" fill="none" stroke="#333" stroke-width="1.1"/></svg>
<svg class="a" style="left:1890px;top:200px;" width="10" height="10" viewBox="0 0 10 10"><path d="M0.5 0.5L9.5 9.5M9.5 0.5L0.5 9.5" stroke="#2a2a2a" stroke-width="1.1"/></svg>
<svg class="a" style="left:1871px;top:243px;" width="18" height="20" viewBox="0 0 18 20"><path d="M4 1h8l4 4v11H4z" fill="none" stroke="#444" stroke-width="1.1"/><path d="M2 4v14h11" fill="none" stroke="#444" stroke-width="1.1"/><path d="M7 9h6M7 12h6" stroke="#444" stroke-width="1.1"/></svg>
<div class="a t" style="left:1870px;top:267px;font-size:10px;line-height:11px;color:#333;">模板</div>
<svg class="a" style="left:1870px;top:299px;" width="20" height="20" viewBox="0 0 20 20"><path d="M10 1.5A8.5 8.5 0 1 0 18.5 10H10z" fill="none" stroke="#444" stroke-width="1.1"/><path d="M10 1.5A8.5 8.5 0 0 1 18.5 10" fill="none" stroke="#444" stroke-width="1.1"/></svg>
<div class="a t" style="left:1870px;top:323px;font-size:10px;line-height:11px;color:#333;">素材</div>
<svg class="a" style="left:1870px;top:355px;" width="20" height="20" viewBox="0 0 20 20"><path d="M6 1.5L1.5 5L3.5 9L5 8V18.5H15V8L16.5 9L18.5 5L14 1.5L12 3H8z" fill="none" stroke="#444" stroke-width="1.1"/><path d="M10 1v18" stroke="#444" stroke-width="1.1"/></svg>
<div class="a t" style="left:1860px;top:378px;font-size:10px;line-height:11px;color:#333;">全文排版</div>
<svg class="a" style="left:1870px;top:411px;" width="20" height="20" viewBox="0 0 20 20"><path d="M0.5 15L5 2L9.5 15M2.5 10h5" fill="none" stroke="#444" stroke-width="1.1"/><path d="M9 17l8-9a1.4 1.4 0 0 1 2 2l-8 9H9z" fill="none" stroke="#444" stroke-width="1.1"/></svg>
<div class="a t" style="left:1860px;top:434px;font-size:10px;line-height:11px;color:#333;">排版工具</div>
<svg class="a" style="left:1871px;top:966px;" width="18" height="18" viewBox="0 0 18 18"><circle cx="9" cy="9" r="3" fill="none" stroke="#444" stroke-width="1.2"/><path d="M9 1L10.5 3.2L13 2.4L13.4 5L15.9 5.8L15 8.2L16.8 10L14.7 11.5L15.2 14.1L12.6 14.2L11.3 16.5L9 15.3L6.7 16.5L5.4 14.2L2.8 14.1L3.3 11.5L1.2 10L3 8.2L2.1 5.8L4.6 5L5 2.4L7.5 3.2z" fill="none" stroke="#444" stroke-width="1.1" stroke-linejoin="round"/></svg>
<div class="a t" style="left:12px;top:1024px;font-size:12px;line-height:12px;color:#333;">第 <span style="font-size:1.08em">2</span> 页，共 <span style="font-size:1.08em">34</span> 页</div>
<div class="a t" style="left:128px;top:1024px;font-size:12px;line-height:12px;color:#333;"><span style="font-size:1.08em">12069</span> 个字</div>
<svg class="a" style="left:209px;top:1022px;" width="16" height="15" viewBox="0 0 16 15"><path d="M1.5 1.5H6.5V13.5H1.5z" fill="none" stroke="#333" stroke-width="1.1"/><path d="M6.5 1.5L8 0.8H13.5V7" fill="none" stroke="#333" stroke-width="1.1"/><path d="M8.5 8.5L14.5 14.5M14.5 8.5L8.5 14.5" stroke="#333" stroke-width="1.1"/></svg>
<div class="a t" style="left:242px;top:1024px;font-size:12px;line-height:12px;color:#333;">简体中文(中国大陆)</div>
<svg class="a" style="left:365px;top:1021px;" width="15" height="16" viewBox="0 0 15 16"><circle cx="6" cy="2.8" r="1.9" fill="none" stroke="#333" stroke-width="1"/><path d="M1 5.5C3 6.5 4.5 6.5 6 6.5C7.5 6.5 9 6.5 11 5.5M6 6.5V9.5L3.5 14.5M6 9.5L7.5 11" fill="none" stroke="#333" stroke-width="1.1"/><path d="M8.5 10L13.5 15M13.5 10L8.5 15" stroke="#333" stroke-width="1.1"/></svg>
<div class="a t" style="left:383px;top:1024px;font-size:12px;line-height:12px;color:#1a1a1a;">辅助功能<span style="font-size:1.08em">:</span> 调查</div>
<svg class="a" style="left:1562px;top:1022px;" width="14" height="14" viewBox="0 0 14 14"><path d="M0.5 4V0.5H4M10 0.5h3.5V4M13.5 10v3.5H10M4 13.5H0.5V10" fill="none" stroke="#333" stroke-width="1.1"/><path d="M4 3h4l2 2v6H4z" fill="none" stroke="#333" stroke-width="1.1"/></svg>
<div class="a t" style="left:1580px;top:1024px;font-size:12px;line-height:12px;color:#333;">专注</div>
<svg class="a" style="left:1628px;top:1022px;" width="14" height="13" viewBox="0 0 14 13"><path d="M0.5 1.5h5.5l1 1 1-1h5.5v10.5H8l-1 1-1-1H0.5z M7 2.5v10" fill="none" stroke="#333" stroke-width="1.1"/><path d="M2.5 4.5h2.5M2.5 7h2.5M9 4.5h2.5M9 7h2.5" stroke="#333" stroke-width="1"/></svg>
<div class="a" style="left:1655px;top:1019px;width:40px;height:19px;background:#dcdcdc"></div>
<svg class="a" style="left:1669px;top:1022px;" width="12" height="14" viewBox="0 0 12 14"><rect x="0.5" y="0.5" width="11" height="13" fill="none" stroke="#333" stroke-width="1.1"/><path d="M2.5 3.5h7M2.5 6h7M2.5 8.5h7M2.5 11h7" stroke="#333" stroke-width="1"/></svg>
<svg class="a" style="left:1708px;top:1022px;" width="15" height="15" viewBox="0 0 15 15"><path d="M10 0.5H0.5v13H6" fill="none" stroke="#333" stroke-width="1.1"/><path d="M2.5 3.5h6M2.5 6h5M2.5 8.5h3" stroke="#333" stroke-width="1"/><circle cx="10.5" cy="10.5" r="3.8" fill="none" stroke="#333" stroke-width="1.1"/><path d="M6.7 10.5h7.6M10.5 6.7v7.6" stroke="#333" stroke-width="0.9"/></svg>
<div class="a" style="left:1744px;top:1028px;width:7px;height:1px;background:#333"></div>
<div class="a" style="left:1754px;top:1028px;width:101px;height:1px;background:#666"></div>
<div class="a" style="left:1806px;top:1022px;width:5px;height:13px;background:#555"></div>
<div class="a" style="left:1858px;top:1028px;width:9px;height:1px;background:#333"></div>
<div class="a" style="left:1862px;top:1024px;width:1px;height:9px;background:#333"></div>
<div class="a t" style="left:1879px;top:1024px;font-size:12px;line-height:12px;color:#333;"><span style="font-size:1.08em">130%</span></div>
</body></html>
